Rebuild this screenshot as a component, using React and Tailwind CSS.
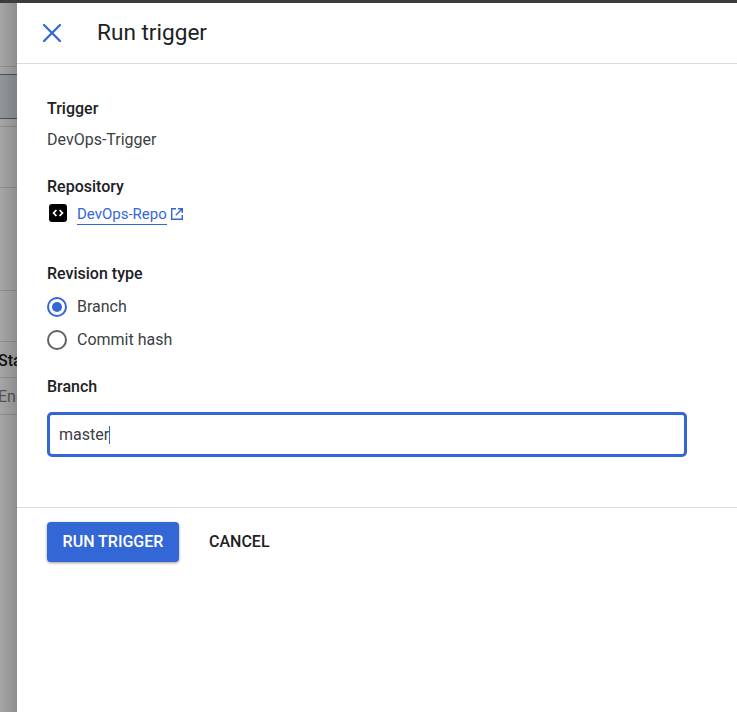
import { X } from "lucide-react";

const Backdrop = () => {
  return (
    <div className="w-[17px] shrink-0 overflow-hidden relative bg-[#a6a6a6] text-[16px] font-medium text-[#111111]">
      <div className="h-[63px]"></div>
      <div className="h-[9px] border-y border-t-[#8f8f8f] border-b-[#4f5254]"></div>
      <div className="h-[44px] border-b border-[#4f5254] bg-[#939799]"></div>
      <div className="h-[8px] border-b border-[#8f8f8f]"></div>
      <div className="h-[61px] border-b border-[#8f8f8f]"></div>
      <div className="h-[103px] border-b border-[#8f8f8f]"></div>
      <div className="h-[51px] border-b border-[#8f8f8f]"></div>
      <div className="h-[36px] pt-[2px] -ml-[2px] border-b border-[#8f8f8f] flex items-center whitespace-nowrap">Status</div>
      <div className="h-[37px] pt-[2px] -ml-[2px] border-b border-[#8f8f8f] flex items-center whitespace-nowrap font-normal text-[#555555]">Enabled</div>
      <div className="absolute inset-0 bg-gradient-to-r from-transparent to-[#00000026]"></div>
    </div>
  );
};

const App = () => {
  return (
    <div className="w-[737px] h-[712px] overflow-hidden flex flex-col bg-white font-['Roboto',sans-serif]">
      <div className="h-[3px] bg-[#3c3c3c]"></div>
      <div className="flex flex-1">
        <Backdrop />
        <div className="flex-1 flex flex-col">
          <div className="h-[61px] border-b border-[#dadce0] flex items-center pl-[19px]">
            <X className="w-[32px] h-[32px] text-[#3367d6]" strokeWidth={1.7} />
            <h1 className="ml-[29px] text-[22.6px] text-[#202124] font-normal leading-[28px]">Run trigger</h1>
          </div>

          <div className="px-[30px]">
            <div className="mt-[35px] text-[16px] leading-[20px] font-medium text-[#202124]">Trigger</div>
            <div className="mt-[11px] text-[16px] leading-[20px] text-[#3c4043]">DevOps-Trigger</div>

            <div className="mt-[27px] text-[16px] leading-[20px] font-medium text-[#202124]">Repository</div>
            <div className="mt-[7px] flex items-center h-[20px]">
              <svg className="ml-[2px] mb-[2px]" width="18" height="18" viewBox="0 0 18 18">
                <rect width="18" height="18" rx="3" fill="#000" />
                <path d="M7.4 6 4.6 9l2.8 3M10.6 6l2.8 3-2.8 3" fill="none" stroke="#fff" strokeWidth="1.8" />
              </svg>
              <a href="#" className="ml-[10px] text-[15px] leading-[20px] text-[#3367d6] border-b border-[#3367d6] h-[21px]">DevOps-Repo</a>
              <svg className="ml-[3px]" width="14" height="14" viewBox="0 0 14 14" fill="none" stroke="#3367d6" strokeWidth="1.4">
                <path d="M6 1.7H1.7v10.6h10.6V8M8 1.7h4.3V6M12.2 1.8 5.8 8.2" />
              </svg>
            </div>

            <div className="mt-[40px] text-[16px] leading-[20px] font-medium text-[#202124]">Revision type</div>
            <div className="mt-[13px] flex items-center h-[20px]">
              <span className="w-[20px] h-[20px] rounded-full border-2 border-[#3367d6] flex items-center justify-center">
                <span className="w-[10px] h-[10px] rounded-full bg-[#3367d6]"></span>
              </span>
              <span className="ml-[10px] text-[16px] text-[#3c4043]">Branch</span>
            </div>
            <div className="mt-[13px] flex items-center h-[20px]">
              <span className="w-[20px] h-[20px] rounded-full border-2 border-[#5f6368]"></span>
              <span className="ml-[10px] text-[16px] text-[#3c4043]">Commit hash</span>
            </div>

            <div className="mt-[27px] text-[16px] leading-[20px] font-medium text-[#202124]">Branch</div>
            <div className="mt-[15px] w-[640px] h-[45px] rounded-[5px] border-[3px] border-[#3367d6] flex items-center pl-[9px] text-[16px] text-[#3c4043]">
              master<span className="w-px h-[18px] bg-[#3367d6]"></span>
            </div>
          </div>

          <div className="mt-[50px] border-t border-[#dadce0] px-[30px] pt-[14px] flex items-center">
            <button className="w-[132px] h-[40px] rounded-[4px] bg-[#3367d6] text-white text-[16px] font-medium shadow-[0_1px_3px_rgba(0,0,0,0.4)]">RUN TRIGGER</button>
            <button className="ml-[30px] text-[16px] font-medium text-[#202124]">CANCEL</button>
          </div>
        </div>
      </div>
    </div>
  );
};

export default App;
